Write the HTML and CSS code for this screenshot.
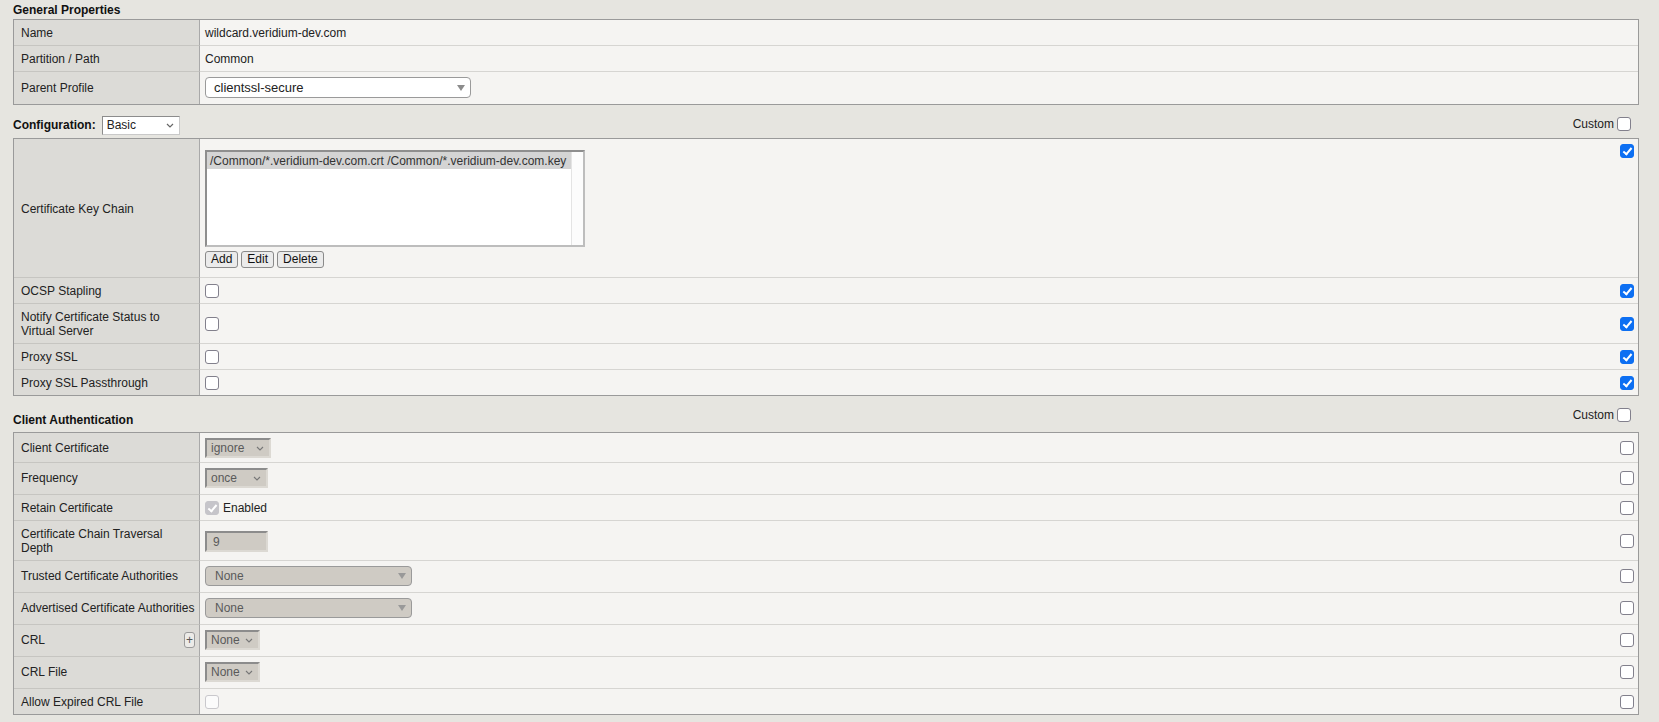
FILE: index.html
```html
<!DOCTYPE html>
<html lang="en">
<head>
  <meta charset="UTF-8" />
  <title>Client SSL Profile</title>
  <link rel="stylesheet" href="styles.css">
</head>
<body>
<div class="page">

  <h2 class="section-title">General Properties</h2>
  <table class="props">
    <tr>
      <td class="label">Name</td>
      <td class="value">wildcard.veridium-dev.com</td>
    </tr>
    <tr>
      <td class="label">Partition / Path</td>
      <td class="value">Common</td>
    </tr>
    <tr class="ctl-row">
      <td class="label">Parent Profile</td>
      <td class="value">
        <div class="dropdown profile">clientssl-secure
          <svg width="8" height="6" viewBox="0 0 8 6"><path d="M0 0h8L4 6z" fill="#8c8c8c"/></svg>
        </div>
      </td>
    </tr>
  </table>

  <div class="section-head">
    <div class="config">
      <span class="config-label">Configuration:</span>
      <div class="select basic">Basic
        <svg width="8" height="5" viewBox="0 0 8 5"><path d="M1 1l3 3 3-3" fill="none" stroke="#666" stroke-width="1.2"/></svg>
      </div>
    </div>
    <label class="custom">Custom <input type="checkbox" class="cb"></label>
  </div>
  <table class="props">
    <tr>
      <td class="label">Certificate Key Chain</td>
      <td class="value chain">
        <div class="listbox">
          <div class="options">
            <div class="option selected">/Common/*.veridium-dev.com.crt /Common/*.veridium-dev.com.key</div>
          </div>
          <div class="track"></div>
        </div>
        <div class="buttons">
          <button class="btn">Add</button>
          <button class="btn">Edit</button>
          <button class="btn">Delete</button>
        </div>
      </td>
      <td class="opt top"><input type="checkbox" class="cb" checked></td>
    </tr>
    <tr>
      <td class="label">OCSP Stapling</td>
      <td class="value"><input type="checkbox" class="cb"></td>
      <td class="opt"><input type="checkbox" class="cb" checked></td>
    </tr>
    <tr>
      <td class="label">Notify Certificate Status to<br>Virtual Server</td>
      <td class="value"><input type="checkbox" class="cb"></td>
      <td class="opt"><input type="checkbox" class="cb" checked></td>
    </tr>
    <tr>
      <td class="label">Proxy SSL</td>
      <td class="value"><input type="checkbox" class="cb"></td>
      <td class="opt"><input type="checkbox" class="cb" checked></td>
    </tr>
    <tr>
      <td class="label">Proxy SSL Passthrough</td>
      <td class="value"><input type="checkbox" class="cb"></td>
      <td class="opt"><input type="checkbox" class="cb" checked></td>
    </tr>
  </table>

  <div class="section-head auth">
    <h2 class="section-title">Client Authentication</h2>
    <label class="custom">Custom <input type="checkbox" class="cb"></label>
  </div>
  <table class="props">
    <tr class="ctl-row first">
      <td class="label">Client Certificate</td>
      <td class="value">
        <div class="select off w66">ignore
          <svg width="8" height="5" viewBox="0 0 8 5"><path d="M1 1l3 3 3-3" fill="none" stroke="#777" stroke-width="1.1"/></svg>
        </div>
      </td>
      <td class="opt"><input type="checkbox" class="cb"></td>
    </tr>
    <tr class="ctl-row">
      <td class="label">Frequency</td>
      <td class="value">
        <div class="select off w63">once
          <svg width="8" height="5" viewBox="0 0 8 5"><path d="M1 1l3 3 3-3" fill="none" stroke="#777" stroke-width="1.1"/></svg>
        </div>
      </td>
      <td class="opt"><input type="checkbox" class="cb"></td>
    </tr>
    <tr>
      <td class="label">Retain Certificate</td>
      <td class="value">
        <div class="check-text"><input type="checkbox" class="cb" checked disabled> Enabled</div>
      </td>
      <td class="opt"><input type="checkbox" class="cb"></td>
    </tr>
    <tr>
      <td class="label">Certificate Chain Traversal<br>Depth</td>
      <td class="value"><div class="textbox off">9</div></td>
      <td class="opt"><input type="checkbox" class="cb"></td>
    </tr>
    <tr class="ctl-row">
      <td class="label">Trusted Certificate Authorities</td>
      <td class="value">
        <div class="dropdown off">None
          <svg width="8" height="6" viewBox="0 0 8 6"><path d="M0 0h8L4 6z" fill="#999"/></svg>
        </div>
      </td>
      <td class="opt"><input type="checkbox" class="cb"></td>
    </tr>
    <tr class="ctl-row">
      <td class="label">Advertised Certificate Authorities</td>
      <td class="value">
        <div class="dropdown off">None
          <svg width="8" height="6" viewBox="0 0 8 6"><path d="M0 0h8L4 6z" fill="#999"/></svg>
        </div>
      </td>
      <td class="opt"><input type="checkbox" class="cb"></td>
    </tr>
    <tr class="ctl-row">
      <td class="label"><div class="label-add">CRL <span class="plus">+</span></div></td>
      <td class="value">
        <div class="select off w55">None
          <svg width="8" height="5" viewBox="0 0 8 5"><path d="M1 1l3 3 3-3" fill="none" stroke="#777" stroke-width="1.1"/></svg>
        </div>
      </td>
      <td class="opt"><input type="checkbox" class="cb"></td>
    </tr>
    <tr class="ctl-row">
      <td class="label">CRL File</td>
      <td class="value">
        <div class="select off w55">None
          <svg width="8" height="5" viewBox="0 0 8 5"><path d="M1 1l3 3 3-3" fill="none" stroke="#777" stroke-width="1.1"/></svg>
        </div>
      </td>
      <td class="opt"><input type="checkbox" class="cb"></td>
    </tr>
    <tr>
      <td class="label">Allow Expired CRL File</td>
      <td class="value"><input type="checkbox" class="cb" disabled></td>
      <td class="opt"><input type="checkbox" class="cb"></td>
    </tr>
  </table>

</div>
</body>
</html>
```

FILE: styles.css
```css
* {
  box-sizing: border-box;
}

body {
  margin: 0;
  background: #e6e5e0;
  font-family: "Liberation Sans", Arial, Helvetica, sans-serif;
  font-size: 12px;
  line-height: 14px;
  color: #222;
}

.page {
  padding: 3px 20px 9px 13px;
}

.section-title {
  margin: 0 0 2px;
  font-size: 12px;
  line-height: 14px;
  font-weight: bold;
  color: #111;
}

/* property tables */
.props {
  width: 100%;
  border-collapse: separate;
  border-spacing: 0;
  border: 1px solid #9a9a9a;
  background: #f5f4f2;
}

.props td {
  padding: 6px 5px 5px 5px;
  vertical-align: middle;
}

.props tr + tr td {
  border-top: 1px solid #d6d5d2;
}

.props .label {
  width: 186px;
  padding-left: 7px;
  padding-right: 2px;
  white-space: nowrap;
  background: #dcdbd7;
  border-right: 1px solid #a9a9a9;
}

.props tr + tr .label {
  border-top-color: #c6c5c1;
}

.props .ctl-row td {
  padding-top: 5px;
  padding-bottom: 6px;
}

.props .ctl-row.first td {
  padding-top: 5px;
  padding-bottom: 4px;
}

.props .value.chain {
  padding-top: 11px;
  padding-bottom: 9px;
}

.props .opt {
  width: 24px;
  padding-left: 0;
  padding-right: 4px;
}

.props .opt.top {
  vertical-align: top;
  padding-top: 5px;
}

.props .opt .cb {
  margin-left: auto;
}

/* section headers */
.section-head {
  display: flex;
  align-items: center;
  justify-content: space-between;
  height: 20px;
  margin: 10px 0 3px;
}

.section-head.auth {
  align-items: flex-start;
  height: 25px;
  margin: 11px 0 0;
}

.section-head.auth .section-title {
  margin-top: 6px;
}

.config {
  display: flex;
  align-items: center;
}

.config-label {
  font-weight: bold;
  color: #111;
  margin-right: 6px;
}

.custom {
  display: flex;
  align-items: center;
  gap: 3px;
  margin-right: 8px;
  margin-top: -2px;
  color: #222;
}

.section-head.auth .custom {
  margin-top: 1px;
}

/* checkboxes */
.cb {
  appearance: none;
  -webkit-appearance: none;
  display: block;
  width: 14px;
  height: 14px;
  margin: 0;
  border: 1.6px solid #82808c;
  border-radius: 3px;
  background: #fff;
}

.cb:checked {
  background: #0d6ff2;
  border-color: #0d6ff2;
}

.cb:checked::after {
  content: "";
  display: block;
  width: 3px;
  height: 7px;
  margin: 0.5px 0 0 3.5px;
  border: solid #fff;
  border-width: 0 2px 2px 0;
  transform: rotate(40deg);
}

.cb:disabled {
  border-color: #c9c8cc;
  background: #fbfbfb;
}

.cb:checked:disabled {
  background: #c6c5ca;
  border-color: #c6c5ca;
}

.check-text {
  display: flex;
  align-items: center;
  gap: 4px;
}

/* controls */
.dropdown {
  display: flex;
  align-items: center;
  justify-content: space-between;
  height: 21px;
  width: 266px;
  padding: 0 5px 0 8px;
  border: 1px solid #9a9a9a;
  border-radius: 4px;
  background: #fff;
  font-size: 13px;
  color: #222;
}

.dropdown.off {
  width: 207px;
  height: 20px;
  background: #cfcbc4;
  color: #5a5a5a;
  font-size: 12px;
  padding-left: 9px;
}

.select {
  display: flex;
  align-items: center;
  justify-content: space-between;
  height: 20px;
  padding: 0 5px 0 4px;
  border: 2px solid;
  border-color: #8c8c8c #dcd9d3 #dcd9d3 #8c8c8c;
  background: #cfcbc4;
  color: #5a5a5a;
  font-size: 12px;
}

.select.basic {
  width: 78px;
  height: 19px;
  border-width: 1px;
  border-color: #8c8c8c #c9c9c9 #c9c9c9 #8c8c8c;
  background: #fff;
  color: #222;
  padding-left: 4px;
}

.w66 { width: 66px; }
.w63 { width: 63px; }
.w55 { width: 55px; }

.textbox {
  width: 63px;
  height: 21px;
  padding: 2px 6px;
  border: 2px solid;
  border-color: #8c8c8c #dcd9d3 #dcd9d3 #8c8c8c;
  background: #cfcbc4;
  color: #5a5a5a;
}

.label-add {
  display: flex;
  align-items: center;
  justify-content: space-between;
}

.plus {
  display: flex;
  align-items: center;
  justify-content: center;
  width: 11px;
  height: 16px;
  margin-right: 2px;
  border: 1px solid #9a9a9a;
  border-radius: 3px;
  background: #ecebe8;
  color: #555;
  font-size: 12px;
}

/* certificate key chain list */
.listbox {
  display: flex;
  width: 380px;
  height: 97px;
  border: 2px solid;
  border-color: #8e8e8e #bdbdbd #bdbdbd #8e8e8e;
  background: #fff;
}

.listbox .options {
  flex: 1;
}

.listbox .option {
  padding: 2px 3px 1px;
  white-space: nowrap;
  font-size: 12px;
  color: #333;
}

.listbox .option.selected {
  background: #d4d4d4;
}

.listbox .track {
  width: 12px;
  border-left: 1px solid #e4e4e4;
  background: #fcfcfc;
}

.buttons {
  display: flex;
  gap: 3px;
  margin-top: 4px;
}

.btn {
  height: 17px;
  padding: 0 5px;
  border: 1px solid #8a8a8a;
  border-radius: 3px;
  background: #ebebeb;
  font-family: inherit;
  font-size: 12px;
  line-height: 15px;
  color: #111;
}
```
